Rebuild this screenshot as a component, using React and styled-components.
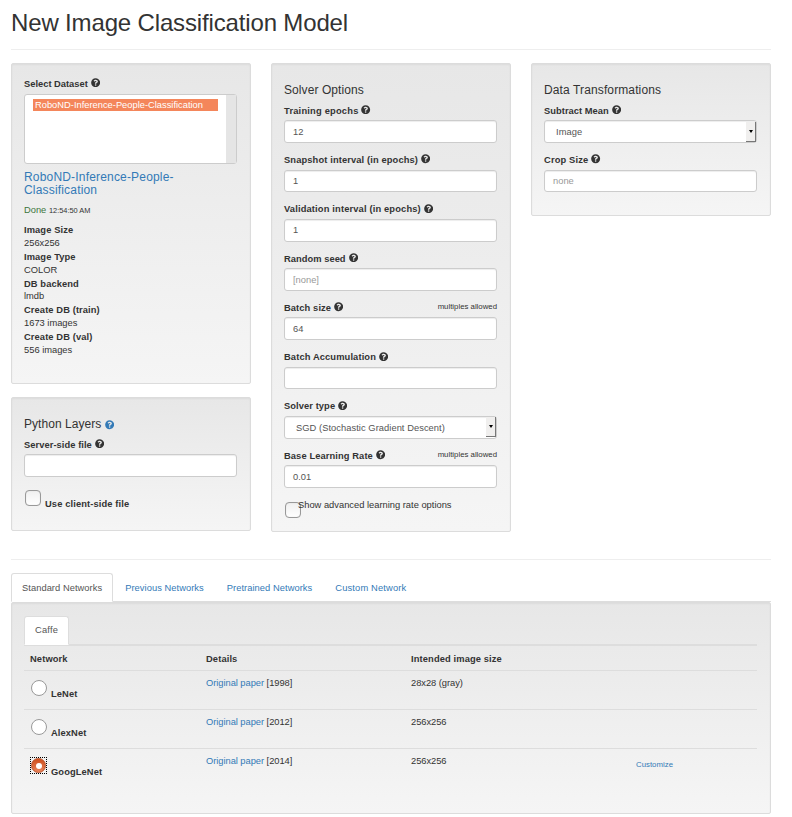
import React from "react";
import styled, { createGlobalStyle } from "styled-components";
import { FaQuestionCircle } from "react-icons/fa";

const Global = createGlobalStyle`
  * { box-sizing: border-box; }
  body {
    margin: 0;
    background: #fff;
    color: #333;
    font: 9.333px/13.333px "Liberation Sans", Arial, sans-serif;
  }
`;

const Page = styled.main`
  width: 760px;
  height: 817px;
  margin-left: 11px;
  overflow: hidden;
`;

const Title = styled.h1`
  margin: 0;
  height: 49px;
  padding-top: 10px;
  font-size: 24px;
  line-height: 26px;
  font-weight: 400;
  white-space: nowrap;
  letter-spacing: -0.15px;
`;

const Rule = styled.hr`
  margin: 0;
  border: 0;
  border-top: 1px solid #eee;
`;

const Columns = styled.div`
  display: flex;
  align-items: flex-start;
  gap: 20px;
  height: 509px;
  padding-top: 13px;
`;

const Column = styled.div`
  display: flex;
  flex-direction: column;
  gap: 13px;
  width: 240px;
`;

const NetworkArea = styled.section`
  padding-top: 13px;
`;

const Well = styled.section`
  height: ${(p) => p.$height}px;
  padding: 13px 13px 0 12px;
  border: 1px solid #dcdcdc;
  border-radius: 2px;
  background: linear-gradient(#e7e7e7, #f5f5f5);
  box-shadow: inset 0 1px 2px rgba(0, 0, 0, 0.05);
`;

const Heading = styled.h4`
  height: 13.2px;
  margin: 6px 0 7.4px;
  padding-top: 1px;
  font-size: 12px;
  line-height: 13.2px;
  font-weight: 400;
  white-space: nowrap;
  letter-spacing: ${(p) => p.$track || 0}px;
`;

const Field = styled.div`
  margin-bottom: 10px;
`;

const LabelRow = styled.div`
  display: flex;
  justify-content: space-between;
  height: 13.33px;
  margin-bottom: 3.33px;
  white-space: nowrap;
`;

const Label = styled.label`
  display: flex;
  padding-top: ${(p) => (p.$raised ? 0.6 : 1)}px;
  font-weight: 700;
  letter-spacing: ${(p) => p.$track || 0}px;
`;

const Help = styled(FaQuestionCircle)`
  flex: none;
  width: 9.3px;
  height: 9.3px;
  margin: 0.6px 0 0 2.9px;
  color: #333;
`;

const HeadingHelp = styled(Help)`
  margin: 0;
  vertical-align: -1.5px;
  color: #337ab7;
`;

const Hint = styled.small`
  padding-top: 0.5px;
  font-size: 7.8px;
  line-height: 11px;
`;

const Control = styled.div`
  display: flex;
  align-items: center;
  justify-content: space-between;
  height: 22.67px;
  padding-left: ${(p) => (p.$select ? 11 : 8)}px;
  border: 1px solid #ccc;
  border-radius: 3px;
  background: #fff;
  box-shadow: inset 0 1px 1px rgba(0, 0, 0, 0.075);
  color: ${(p) => (p.$placeholder ? "#999" : "#555")};
`;

const Value = styled.span`
  padding-top: 1.6px;
  letter-spacing: ${(p) => p.$track || 0}px;
`;

const Arrow = styled.span`
  display: flex;
  align-items: center;
  justify-content: center;
  width: 10px;
  height: 20px;
  border-right: 1px solid #777;
  border-bottom: 1px solid #777;
  background: #f0efee;
  &::after {
    content: "";
    border: 2px solid transparent;
    border-top: 3px solid #000;
    border-bottom: 0;
  }
`;

const ListBox = styled.div`
  display: flex;
  height: 70px;
  border: 1px solid #ccc;
  border-radius: 3px;
  background: #fff;
`;

const Options = styled.div`
  flex: 1;
  padding: 4px 8px;
`;

const Option = styled.div`
  height: 12px;
  padding-left: 2px;
  background: #f4865b;
  color: #fff;
  line-height: 12px;
  white-space: nowrap;
`;

const Gutter = styled.div`
  width: 10px;
  background: #e5e5e5;
`;

const Link = styled.a`
  color: #337ab7;
`;

const DatasetLink = styled(Link)`
  display: block;
  margin-top: 7px;
  font-size: 12px;
  line-height: 13.2px;
  letter-spacing: 0.18px;
`;

const Status = styled.p`
  margin: 6.7px 0 7.4px;
  color: #3c763d;
`;

const Time = styled.small`
  color: #333;
  font-size: 7.4px;
`;

const Facts = styled.dl`
  margin: 0;
  dt { font-weight: 700; letter-spacing: 0.1px; }
  dd { margin: -0.7px 0 0.7px; }
`;

const Check = styled.label`
  display: flex;
  height: 24px;
  margin-top: 12.8px;
  padding-left: 1px;
  font-weight: 700;
  letter-spacing: 0.12px;
`;

const CheckText = styled.span`
  padding-top: 8px;
`;

const Box = styled.span`
  flex: none;
  width: 16px;
  height: 16px;
  border: 1px solid #999;
  border-radius: 4px;
  background: linear-gradient(#f0f0f0, #fff);
  box-shadow: inset 0 0 1px rgba(0, 0, 0, 0.2);
`;

const CheckBox = styled(Box)`
  margin-right: 4px;
`;

const Advanced = styled.label`
  display: flex;
  padding: 1px 0 0 1px;
  white-space: nowrap;
`;

const AdvancedBox = styled(Box)`
  margin: 3px -3px 0 0;
`;

const Tabs = styled.nav`
  display: flex;
  height: 29px;
  border-bottom: 1px solid #ddd;
`;

const Tab = styled.a`
  height: 29px;
  margin-right: 1px;
  padding: ${(p) => (p.$compact ? 7 : 8)}px 10px 0;
  border: 1px solid ${(p) => (p.$active ? "#ddd" : "transparent")};
  border-bottom-color: ${(p) => (p.$active ? "#fff" : "transparent")};
  border-radius: 3px 3px 0 0;
  background: ${(p) => (p.$active ? "#fff" : "transparent")};
  color: ${(p) => (p.$active ? "#555" : "#337ab7")};
  letter-spacing: ${(p) => p.$track || 0.05}px;
  white-space: nowrap;
`;

const Row = styled.div`
  display: grid;
  grid-template-columns: 176px 205px 225px 1fr;
  height: ${(p) => (p.$head ? 25 : 39)}px;
  padding: ${(p) => (p.$head ? 7 : 6)}px 0 0 6px;
  border-top: 1px solid #ddd;
  font-weight: ${(p) => (p.$head ? 700 : 400)};
  letter-spacing: ${(p) => (p.$head ? 0.12 : -0.04)}px;
`;

const Choice = styled.label`
  display: flex;
  align-items: flex-start;
  font-weight: 700;
  letter-spacing: 0.1px;
`;

const RadioFrame = styled.span`
  width: 17px;
  height: 17px;
  margin: 2px 4px 0 0;
  border: 1px ${(p) => (p.$on ? "dotted #000" : "solid transparent")};
`;

const Radio = styled.span`
  display: flex;
  align-items: center;
  justify-content: center;
  width: ${(p) => (p.$on ? 15 : 16)}px;
  height: ${(p) => (p.$on ? 15 : 16)}px;
  border: 1px solid ${(p) => (p.$on ? "#b9532c" : "#999")};
  border-radius: 50%;
  background: ${(p) => (p.$on ? "linear-gradient(#cf4f1d, #e8845c)" : "#fff")};
  &::after {
    content: "";
    width: 6px;
    height: 6px;
    border-radius: 50%;
    background: #fff;
  }
`;

const ChoiceName = styled.span`
  padding-top: 11px;
`;

const Customize = styled(Link)`
  padding-top: 3px;
  font-size: 7.8px;
  letter-spacing: 0.02px;
`;

const fields = [
  { label: "Training epochs", value: "12", track: 0.2 },
  { label: "Snapshot interval (in epochs)", value: "1", track: 0.12 },
  { label: "Validation interval (in epochs)", value: "1", track: 0.15 },
  { label: "Random seed", value: "[none]", placeholder: true, track: 0.04 },
  { label: "Batch size", value: "64", multiple: true, track: 0.1 },
  { label: "Batch Accumulation", value: "", track: 0.12 },
  { label: "Solver type", value: "SGD (Stochastic Gradient Descent)", select: true, track: 0.08 },
  { label: "Base Learning Rate", value: "0.01", multiple: true, track: 0.1 },
];

const facts = [
  ["Image Size", "256x256"],
  ["Image Type", "COLOR"],
  ["DB backend", "lmdb"],
  ["Create DB (train)", "1673 images"],
  ["Create DB (val)", "556 images"],
];

const networks = [
  { name: "LeNet", year: "1998", size: "28x28 (gray)" },
  { name: "AlexNet", year: "2012", size: "256x256" },
  { name: "GoogLeNet", year: "2014", size: "256x256", on: true },
];

function FormField({ label, value, placeholder, multiple, select, track }) {
  return (
    <Field>
      <LabelRow>
        <Label $track={track}>{label}<Help /></Label>
        {multiple && <Hint>multiples allowed</Hint>}
      </LabelRow>
      <Control $placeholder={placeholder} $select={select}>
        <Value $track={select ? 0.05 : 0}>{value}</Value>
        {select && <Arrow />}
      </Control>
    </Field>
  );
}

export default function App() {
  return (
    <Page>
      <Global />
      <Title>New Image Classification Model</Title>
      <Rule />
      <Columns>
        <Column>
          <Well $height={321}>
            <LabelRow><Label $raised>Select Dataset<Help /></Label></LabelRow>
            <ListBox>
              <Options><Option>RoboND-Inference-People-Classification</Option></Options>
              <Gutter />
            </ListBox>
            <DatasetLink>RoboND-Inference-People-<br />Classification</DatasetLink>
            <Status>Done <Time>12:54:50 AM</Time></Status>
            <Facts>
              {facts.map(([k, v]) => (
                <React.Fragment key={k}><dt>{k}</dt><dd>{v}</dd></React.Fragment>
              ))}
            </Facts>
          </Well>
          <Well $height={134}>
            <Heading $track={0.05}>Python Layers <HeadingHelp /></Heading>
            <FormField label="Server-side file" value="" track={0.06} />
            <Check><CheckBox /><CheckText>Use client-side file</CheckText></Check>
          </Well>
        </Column>
        <Column>
          <Well $height={469}>
            <Heading $track={0.08}>Solver Options</Heading>
            {fields.map((f) => <FormField key={f.label} {...f} />)}
            <Advanced><AdvancedBox />Show advanced learning rate options</Advanced>
          </Well>
        </Column>
        <Column>
          <Well $height={153}>
            <Heading $track={0.12}>Data Transformations</Heading>
            <FormField label="Subtract Mean" value="Image" select track={0.04} />
            <FormField label="Crop Size" value="none" placeholder track={0.15} />
          </Well>
        </Column>
      </Columns>
      <Rule />
      <NetworkArea>
        <Tabs>
          <Tab $active>Standard Networks</Tab>
          <Tab>Previous Networks</Tab>
          <Tab>Pretrained Networks</Tab>
          <Tab $track={0.16}>Custom Network</Tab>
        </Tabs>
        <Well $height={212}>
          <Tabs><Tab $active $compact $track={0.2}>Caffe</Tab></Tabs>
          <Row $head><span>Network</span><span>Details</span><span>Intended image size</span></Row>
          {networks.map((n) => (
            <Row key={n.name}>
              <Choice>
                <RadioFrame $on={n.on}><Radio $on={n.on} /></RadioFrame>
                <ChoiceName>{n.name}</ChoiceName>
              </Choice>
              <span><Link>Original paper</Link> [{n.year}]</span>
              <span>{n.size}</span>
              {n.on && <Customize>Customize</Customize>}
            </Row>
          ))}
        </Well>
      </NetworkArea>
    </Page>
  );
}
